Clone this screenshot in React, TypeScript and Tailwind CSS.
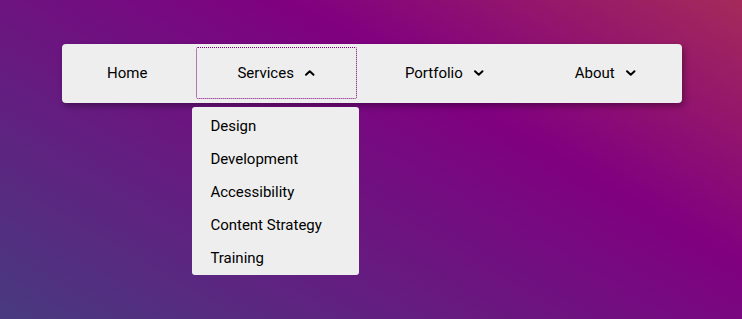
const ChevronUp = () => (
  <svg width="12" height="10" viewBox="0 0 12 10" className="ml-[10px]" aria-hidden="true">
    <path d="M2 6.8 L5.75 3.2 L9.5 6.8" fill="none" stroke="#000" strokeWidth="2" strokeLinecap="round" strokeLinejoin="round" />
  </svg>
);

const ChevronDown = () => (
  <svg width="12" height="10" viewBox="0 0 12 10" className="ml-[10px]" aria-hidden="true">
    <path d="M2 3.2 L5.75 6.8 L9.5 3.2" fill="none" stroke="#000" strokeWidth="2" strokeLinecap="round" strokeLinejoin="round" />
  </svg>
);

const services = ['Design', 'Development', 'Accessibility', 'Content Strategy', 'Training'];

export default function App() {
  return (
    <div
      className="min-h-screen w-full overflow-hidden bg-[linear-gradient(30deg,#483a80_0%,#800080_65%,#a52a5a_100%)] text-black text-[15px]"
      style={{ fontFamily: 'Roboto, "Noto Sans", sans-serif' }}
    >
      <nav className="w-[620px] ml-[62px] pt-[44px]">
        <ul className="flex items-start gap-[9px] h-[59px] pt-[3px] pl-[5px] bg-[#eeeeee] rounded-[4px] shadow-[2px_3px_6px_rgba(0,0,0,0.35)]">
          <li>
            <a className="flex items-center h-[52px] px-10">Home</a>
          </li>
          <li className="relative">
            <button className="flex items-center h-[52px] px-10 border border-dotted border-[#800080] rounded-[2px]">
              Services
              <ChevronUp />
            </button>
            <ul className="absolute left-[-4px] top-full mt-2 w-[167px] pt-[2.5px] pb-[0.5px] bg-[#eeeeee] rounded-[3px]">
              {services.map((s) => (
                <li key={s} className="flex items-center h-[33px] pl-[18px]">
                  {s}
                </li>
              ))}
            </ul>
          </li>
          <li className="ml-[-2px]">
            <button className="flex items-center h-[52px] px-10 border border-transparent">
              Portfolio
              <ChevronDown />
            </button>
          </li>
          <li className="ml-[-1px]">
            <button className="flex items-center h-[52px] px-10 border border-transparent">
              About
              <ChevronDown />
            </button>
          </li>
        </ul>
      </nav>
    </div>
  );
}
